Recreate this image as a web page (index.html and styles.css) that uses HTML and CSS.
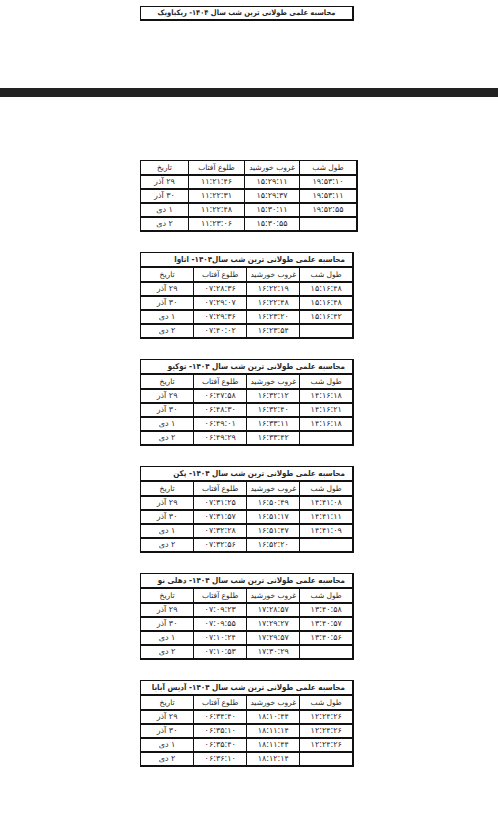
FILE: index.html
```html
<!DOCTYPE html>
<html lang="fa">
<head>
<meta charset="utf-8">
<title>طولانی ترین شب سال</title>
<link rel="stylesheet" href="styles.css">
</head>
<body>
<div class="top-title" dir="rtl">محاسبه علمی طولانی ترین شب سال ۱۴۰۴- ریکیاویک</div>
<div class="bar"></div>
<main class="tables">
  <table class="t" dir="rtl">
    <tr class="head"><td>طول شب</td><td>غروب خورشید</td><td>طلوع آفتاب</td><td>تاریخ</td></tr>
    <tr><td>۱۹:۵۳:۱۰</td><td>۱۵:۲۹:۱۱</td><td>۱۱:۲۱:۴۶</td><td>۲۹ آذر</td></tr>
    <tr><td>۱۹:۵۳:۱۱</td><td>۱۵:۲۹:۳۷</td><td>۱۱:۲۲:۳۱</td><td>۳۰ آذر</td></tr>
    <tr><td>۱۹:۵۲:۵۵</td><td>۱۵:۳۰:۱۱</td><td>۱۱:۲۲:۴۸</td><td>۱ دی</td></tr>
    <tr><td></td><td>۱۵:۳۰:۵۵</td><td>۱۱:۲۳:۰۶</td><td>۲ دی</td></tr>
  </table>

  <table class="t" dir="rtl">
    <tr class="title"><td colspan="4">محاسبه علمی طولانی ترین شب سال۱۴۰۴- اتاوا</td></tr>
    <tr class="head"><td>طول شب</td><td>غروب خورشید</td><td>طلوع آفتاب</td><td>تاریخ</td></tr>
    <tr><td>۱۵:۱۶:۴۸</td><td>۱۶:۲۲:۱۹</td><td>۰۷:۲۸:۳۶</td><td>۲۹ آذر</td></tr>
    <tr><td>۱۵:۱۶:۴۸</td><td>۱۶:۲۲:۴۸</td><td>۰۷:۲۹:۰۷</td><td>۳۰ آذر</td></tr>
    <tr><td>۱۵:۱۶:۴۲</td><td>۱۶:۲۳:۲۰</td><td>۰۷:۲۹:۳۶</td><td>۱ دی</td></tr>
    <tr><td></td><td>۱۶:۲۳:۵۴</td><td>۰۷:۴۰:۰۲</td><td>۲ دی</td></tr>
  </table>

  <table class="t" dir="rtl">
    <tr class="title"><td colspan="4">محاسبه علمی طولانی ترین شب سال ۱۴۰۴- توکیو</td></tr>
    <tr class="head"><td>طول شب</td><td>غروب خورشید</td><td>طلوع آفتاب</td><td>تاریخ</td></tr>
    <tr><td>۱۴:۱۶:۱۸</td><td>۱۶:۳۲:۱۲</td><td>۰۶:۴۷:۵۸</td><td>۲۹ آذر</td></tr>
    <tr><td>۱۴:۱۶:۲۱</td><td>۱۶:۳۲:۴۰</td><td>۰۶:۴۸:۳۰</td><td>۳۰ آذر</td></tr>
    <tr><td>۱۴:۱۶:۱۸</td><td>۱۶:۳۳:۱۱</td><td>۰۶:۴۹:۰۱</td><td>۱ دی</td></tr>
    <tr><td></td><td>۱۶:۳۳:۴۲</td><td>۰۶:۴۹:۲۹</td><td>۲ دی</td></tr>
  </table>

  <table class="t" dir="rtl">
    <tr class="title"><td colspan="4">محاسبه علمی طولانی ترین شب سال ۱۴۰۴- پکن</td></tr>
    <tr class="head"><td>طول شب</td><td>غروب خورشید</td><td>طلوع آفتاب</td><td>تاریخ</td></tr>
    <tr><td>۱۴:۴۱:۰۸</td><td>۱۶:۵۰:۴۹</td><td>۰۷:۳۱:۲۵</td><td>۲۹ آذر</td></tr>
    <tr><td>۱۴:۴۱:۱۱</td><td>۱۶:۵۱:۱۷</td><td>۰۷:۳۱:۵۷</td><td>۳۰ آذر</td></tr>
    <tr><td>۱۴:۴۱:۰۹</td><td>۱۶:۵۱:۴۷</td><td>۰۷:۳۲:۲۸</td><td>۱ دی</td></tr>
    <tr><td></td><td>۱۶:۵۲:۲۰</td><td>۰۷:۳۲:۵۶</td><td>۲ دی</td></tr>
  </table>

  <table class="t" dir="rtl">
    <tr class="title"><td colspan="4">محاسبه علمی طولانی ترین شب سال ۱۴۰۴- دهلی نو</td></tr>
    <tr class="head"><td>طول شب</td><td>غروب خورشید</td><td>طلوع آفتاب</td><td>تاریخ</td></tr>
    <tr><td>۱۳:۴۰:۵۸</td><td>۱۷:۲۸:۵۷</td><td>۰۷:۰۹:۲۳</td><td>۲۹ آذر</td></tr>
    <tr><td>۱۳:۴۰:۵۷</td><td>۱۷:۲۹:۲۷</td><td>۰۷:۰۹:۵۵</td><td>۳۰ آذر</td></tr>
    <tr><td>۱۳:۴۰:۵۶</td><td>۱۷:۲۹:۵۷</td><td>۰۷:۱۰:۲۴</td><td>۱ دی</td></tr>
    <tr><td></td><td>۱۷:۳۰:۲۹</td><td>۰۷:۱۰:۵۳</td><td>۲ دی</td></tr>
  </table>

  <table class="t" dir="rtl">
    <tr class="title"><td colspan="4">محاسبه علمی طولانی ترین شب سال ۱۴۰۴- آدیس آبابا</td></tr>
    <tr class="head"><td>طول شب</td><td>غروب خورشید</td><td>طلوع آفتاب</td><td>تاریخ</td></tr>
    <tr><td>۱۲:۲۴:۲۶</td><td>۱۸:۱۰:۴۴</td><td>۰۶:۳۴:۴۰</td><td>۲۹ آذر</td></tr>
    <tr><td>۱۲:۲۴:۲۶</td><td>۱۸:۱۱:۱۴</td><td>۰۶:۳۵:۱۰</td><td>۳۰ آذر</td></tr>
    <tr><td>۱۲:۲۴:۲۶</td><td>۱۸:۱۱:۴۴</td><td>۰۶:۳۵:۴۰</td><td>۱ دی</td></tr>
    <tr><td></td><td>۱۸:۱۲:۱۴</td><td>۰۶:۳۶:۱۰</td><td>۲ دی</td></tr>
  </table>
</main>
</body>
</html>
```

FILE: styles.css
```css
html, body {
  margin: 0;
  padding: 0;
  background: #ffffff;
}

body {
  font-family: "DejaVu Sans", "Noto Sans", sans-serif;
  color: #2a2a2a;
}

.top-title {
  box-sizing: border-box;
  width: 214px;
  height: 15px;
  margin: 6px 0 0 140px;
  border: 1px solid #111111;
  border-right-width: 2px;
  border-bottom-width: 2px;
  font-family: "DejaVu Sans Condensed", "DejaVu Sans", sans-serif;
  font-size: 7.5px;
  font-weight: bold;
  line-height: 12px;
  text-align: center;
  white-space: nowrap;
}

.bar {
  height: 9px;
  margin-top: 67px;
  background: #222222;
}

.tables {
  display: flex;
  flex-direction: column;
  gap: 20px;
  margin: 63px 0 0 140px;
}

.t {
  width: 214px;
  border-collapse: collapse;
  table-layout: fixed;
  font-size: 8px;
  border-right: 2px solid #111111;
}

.t td {
  height: 12px;
  padding: 0;
  line-height: 12px;
  text-align: center;
  border: 1px solid #111111;
  border-bottom-width: 2px;
  white-space: nowrap;
  overflow: hidden;
}

.t td:nth-child(1) { width: 56px; }
.t td:nth-child(2) { width: 54px; }
.t td:nth-child(3) { width: 55px; }
.t td:nth-child(4) { width: 47px; }

.t .title td {
  height: 13px;
  font-family: "DejaVu Sans Condensed", "DejaVu Sans", sans-serif;
  font-size: 8px;
  font-weight: bold;
  text-align: right;
  padding-right: 7px;
}

.t .head td {
  height: 13px;
  font-size: 7.5px;
}
```
